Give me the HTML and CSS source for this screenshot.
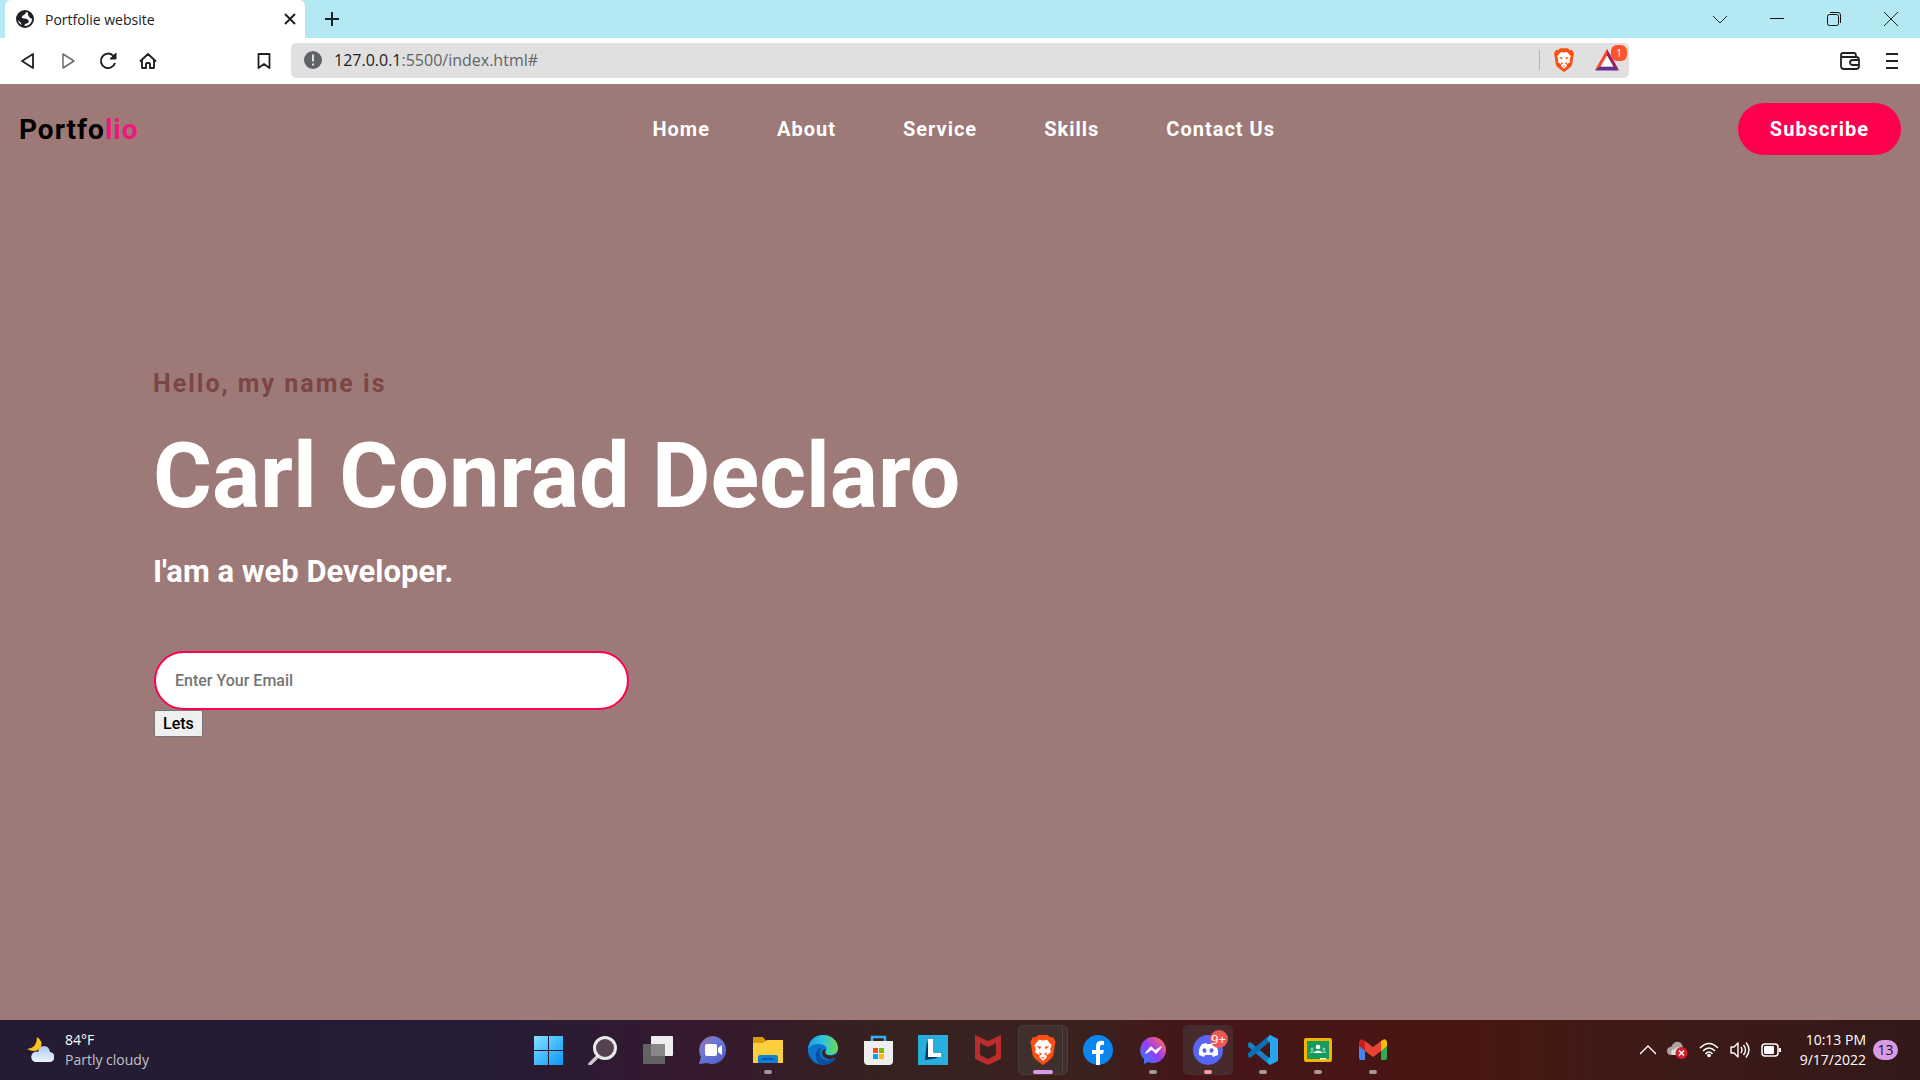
FILE: index.html
```
<!DOCTYPE html>
<html lang="en">
<head>
<meta charset="utf-8">
<title>Portfolie website</title>
<link rel="stylesheet" href="styles.css">
</head>
<body>
<div class="tabstrip">
  <div class="tab">
    <svg width="18" height="18" viewBox="0 0 18 18"><circle cx="9" cy="9" r="8" fill="#fff" stroke="#202124" stroke-width="2"/><path d="M1 8 2 4 6 1h3l1 2-2 2-2 1v2l5 1 2 2-1 2-3 1-1 3H6l-1-4-3-3zM12 1l4 4 1 4-3-1-2-3z" fill="#202124"/></svg>
    <span class="tab-title">Portfolie website</span>
    <button class="icon" aria-label="Close tab"><svg width="12" height="12" viewBox="0 0 12 12"><path d="M1 1l10 10M11 1 1 11" stroke="#202124" stroke-width="2"/></svg></button>
  </div>
  <button class="icon new-tab" aria-label="New tab"><svg width="16" height="16" viewBox="0 0 16 16"><path d="M8 1v14M1 8h14" stroke="#202124" stroke-width="2"/></svg></button>
  <div class="window-controls">
    <button class="icon" aria-label="Tab search"><svg width="14" height="14" viewBox="0 0 14 14"><path d="m0 4 7 7 7-7" fill="none" stroke="#222"/></svg></button>
    <button class="icon" aria-label="Minimize"><svg width="14" height="14" viewBox="0 0 14 14"><path d="M0 6.500h14" stroke="#111"/></svg></button>
    <button class="icon" aria-label="Restore"><svg width="14" height="14" viewBox="0 0 14 14"><rect x=".5" y="2.500" width="11" height="11" rx="2" fill="none" stroke="#111"/><path d="M3 .5h8q2.500 0 2.500 2.500v8" fill="none" stroke="#111"/></svg></button>
    <button class="icon" aria-label="Close"><svg width="14" height="14" viewBox="0 0 14 14"><path d="m0 0 14 14M14 0 0 14" stroke="#222"/></svg></button>
  </div>
</div>
<div class="toolbar">
  <div class="nav-buttons">
    <button class="icon" aria-label="Back"><svg width="18" height="18" viewBox="0 0 18 18"><path d="M14 2v14L3 9z" fill="none" stroke="#202124" stroke-width="1.800" stroke-linejoin="round"/></svg></button>
    <button class="icon" aria-label="Forward"><svg width="18" height="18" viewBox="0 0 18 18"><path d="M4 2v14l11-7z" fill="none" stroke="#6b6b75" stroke-width="1.500" stroke-linejoin="round"/></svg></button>
    <button class="icon" aria-label="Reload"><svg width="18" height="18" viewBox="0 0 18 18"><path d="M16 11a7.200 7.200 0 1 1-2-7.500" fill="none" stroke="#202124" stroke-width="2"/><path d="M17 1v6h-6z" fill="#202124" stroke="#202124" stroke-linejoin="round"/></svg></button>
    <button class="icon" aria-label="Home"><svg width="18" height="18" viewBox="0 0 18 18"><path d="M1 9.500 9 2l8 7.500M3 8v8h4v-4q0-1 1-1h2q1 0 1 1v4h4V8" fill="none" stroke="#202124" stroke-width="1.900" stroke-linejoin="round"/></svg></button>
  </div>
  <button class="icon bookmark" aria-label="Bookmark"><svg width="18" height="18" viewBox="0 0 18 18"><path d="M3.500 2h11v14L9 12l-5.500 4z" fill="none" stroke="#202124" stroke-width="1.800" stroke-linejoin="round"/></svg></button>
  <div class="address">
    <svg width="18" height="18" viewBox="0 0 18 18"><circle cx="9" cy="9" r="9" fill="#5f6368"/><path d="M9 3.500v7M9 12.500v2" stroke="#e0e0e0" stroke-width="2"/></svg>
    <span class="url"><b>127.0.0.1</b>:5500/index.html#</span>
    <span class="divider"></span>
    <svg class="shield" width="20" height="24" viewBox="0 0 32 38"><use href="#brave"/></svg>
    <span class="rewards"><svg width="24" height="22" viewBox="0 0 24 22"><path d="M12 0 0 21l5-2.500 7-12z" fill="#ff4724"/><path d="m12 0 12 21-5-2.500-7-12z" fill="#9e1f63"/><path d="M0 21.500h24l-5-4H5z" fill="#662d91"/><path d="m12 7 6 10.500H6z" fill="#fff"/></svg><span class="rewards-count">1</span></span>
  </div>
  <div class="toolbar-end">
    <button class="icon" aria-label="Wallet"><svg width="20" height="18" viewBox="0 0 20 18"><path d="M1 4v10q0 3 3 3h12q3 0 3-3V8q0-3-3-3H3Q1 5 1 3t2-2h11q2 0 2 3M19 8h-6q-3 0-3 2.500t3 2.500h6" fill="none" stroke="#202124" stroke-width="1.800"/></svg></button>
    <button class="icon" aria-label="Menu"><svg width="12" height="18" viewBox="0 0 12 18"><path d="M0 2h12M0 9h12M0 16h12" stroke="#202124" stroke-width="2"/></svg></button>
  </div>
</div>
<main class="page">
  <nav class="navbar">
    <a class="logo" href="#">Portfo<span>lio</span></a>
    <ul class="links">
      <li><a href="#">Home</a></li><li><a href="#">About</a></li><li><a href="#">Service</a></li><li><a href="#">Skills</a></li><li><a href="#">Contact Us</a></li>
    </ul>
    <a class="subscribe" href="#">Subscribe</a>
  </nav>
  <section class="content">
    <h4>Hello, my name is</h4>
    <h1>Carl Conrad Declaro</h1>
    <h3>I'am a web Developer.</h3>
    <form class="newsletter">
      <input type="email" aria-label="Email" placeholder="Enter Your Email">
      <button type="button">Lets</button>
    </form>
  </section>
</main>
<footer class="taskbar">
  <div class="weather">
    <svg width="27" height="26" viewBox="0 0 27 26"><defs><linearGradient id="cloud" x2="0" y2="1"><stop stop-color="#aac8f2"/><stop offset="1" stop-color="#f0f4fc"/></linearGradient></defs><path d="M10 0q6 4 4 10-5 7-14 2 10-1 10-12" fill="#ffc21a"/><path d="M8 25a5.500 5.500 0 0 1-1-10q3-1 4 0 1-6 6-6t6 6a5 5 0 0 1-1 10z" fill="url(#cloud)"/></svg>
    <div><p>84°F</p><p class="muted">Partly cloudy</p></div>
  </div>
  <div class="apps">
    <button class="app" aria-label="Start"><svg viewBox="0 0 30 30"><defs><linearGradient id="win" gradientUnits="userSpaceOnUse" x1="1" y1="1" x2="30" y2="30"><stop stop-color="#84e1ff"/><stop offset="1" stop-color="#0897fb"/></linearGradient></defs><path d="M1 1h14v14H1zM16 1h14v14H16zM1 16h14v14H1zM16 16h14v14H16z" fill="url(#win)"/></svg></button>
    <button class="app" aria-label="Search"><svg viewBox="0 0 30 30"><path d="m10 21-8 8" stroke="#c9cbcc" stroke-width="3.500" stroke-linecap="round"/><circle cx="17" cy="13" r="10.500" fill="#55414f" stroke="#e8eaea" stroke-width="3"/></svg></button>
    <button class="app" aria-label="Task view"><svg viewBox="0 0 30 30"><rect x="8" y="1" width="22" height="20" rx="1" fill="#eee"/><rect y="9" width="22" height="20" rx="1" fill="#636363"/><path d="M8 9h14v12H8z" fill="#888"/></svg></button>
    <button class="app" aria-label="Chat"><svg viewBox="0 0 30 30"><defs><linearGradient id="chat" x2="1" y2="1"><stop stop-color="#a16ba0"/><stop offset=".4" stop-color="#6c78d8"/><stop offset="1" stop-color="#5059c9"/></linearGradient></defs><path d="M15 1a14 14 0 1 1-6 27l-8 1 2-7A14 14 0 0 1 15 1" fill="url(#chat)"/><rect x="7" y="9" width="12" height="12" rx="2" fill="#fff"/><path d="m20 13 4-3v10l-4-3z" fill="#fff"/></svg></button>
    <button class="app open" aria-label="File Explorer"><svg viewBox="0 0 30 30"><path d="M0 2h10l3 4h14v6H0z" fill="#d99b08"/><path d="M0 8h10l4-3h16v23H0z" fill="#ffce3d"/><path d="M5 28v-6q0-2 2-2h16q2 0 2 2v6z" fill="#0f7fd2"/><path d="M9 24h12" stroke="#064f9a" stroke-width="1.500"/></svg></button>
    <button class="app" aria-label="Edge"><svg viewBox="0 0 30 30"><defs><linearGradient id="edge" x2="1"><stop stop-color="#1ba0e8"/><stop offset=".5" stop-color="#2fc3df"/><stop offset="1" stop-color="#6bdb4b"/></linearGradient></defs><circle cx="15" cy="15" r="15" fill="#0d75cf"/><path d="M0 14C1 5 7 0 15 0c9 0 15 6 15 13 0 5-4 7-8 7-5 0-5-2-4-4 2-4-2-7-7-7-5 0-9 2-11 5" fill="url(#edge)"/><path d="M18 12q-4-1-6 3-2 8 6 10 5 1 10-2-5 7-14 7-7-2-6-11 1-8 10-7" fill="#0b4f9e"/><path d="M18 14q-2 3 0 5 4 3 10 0l2-3v6l-2 1q-9 3-13-2-3-6 3-7" fill="#36242a"/></svg></button>
    <button class="app" aria-label="Microsoft Store"><svg viewBox="0 0 30 30"><path d="M9 7V2h13v5" fill="none" stroke="#36aef4" stroke-width="2.500"/><path d="M1 6h29v20q0 4-4 4H5q-4 0-4-4z" fill="#eee"/><path d="M10 13h5v5h-5z" fill="#f25022"/><path d="M16 13h5v5h-5z" fill="#7fba00"/><path d="M10 19h5v5h-5z" fill="#00a4ef"/><path d="M16 19h5v5h-5z" fill="#ffb900"/></svg></button>
    <button class="app" aria-label="Lenovo"><svg viewBox="0 0 30 30"><path d="M0 0h30v30H0z" fill="#27aedc"/><path d="m9 5-2 20 13-2-8-4z" fill="#07366a"/><path d="M10 4h5v14h8v4H10z" fill="#fff"/></svg></button>
    <button class="app" aria-label="McAfee"><svg viewBox="0 0 30 30"><path d="m2 0 13 6 13-6v24l-13 6-13-6zm5 8v12l8 4 8-4V8l-8 4z" fill="#bb2c2c" fill-rule="evenodd"/></svg></button>
    <button class="app active open" aria-label="Brave"><svg viewBox="0 0 32 38"><g id="brave"><path d="M10 0h12l3 3h4l3 6-1 4-2 13q-1 4-13 12Q4 30 3 26L1 13 0 9l3-6h4z" fill="#fb4f14"/><path d="m11 6 5 1 5-1 6 7-2 5 1 4-6 4 1 2-5 5-5-5 1-2-6-4 1-4-2-5z" fill="#fff"/><path d="m8 14 6 1-2 3zm16 0-6 1 2 3zM11 22l4 2-3 2zm10 0-4 2 3 2zM14 28h4l-2 2z" fill="#fb4f14"/></g></svg></button>
    <button class="app" aria-label="Facebook"><svg viewBox="0 0 30 30"><circle cx="15" cy="15" r="15" fill="#0c86ef"/><path d="M13 30V19H9v-4h4v-4q0-6 8-5v4q-4-1-4 2v3h4l-1 4h-3v11z" fill="#fff"/></svg></button>
    <button class="app open" aria-label="Messenger"><svg viewBox="0 0 30 30"><defs><linearGradient id="mess" x1="0" y1="1" x2="1" y2="0"><stop stop-color="#1689ff"/><stop offset=".5" stop-color="#9a3bf3"/><stop offset=".9" stop-color="#ff656a"/></linearGradient></defs><path d="M15 2a13 13 0 1 1-5 25l-4 2v-5A13 13 0 0 1 15 2" fill="url(#mess)"/><path d="m8 18 5-6 4 4 6-4-5 6-4-4z" fill="#fff" stroke="#fff" stroke-width="1.500" stroke-linejoin="round"/></svg></button>
    <button class="app lit open alert" aria-label="Discord"><svg viewBox="0 0 30 30"><circle cx="15" cy="15" r="15" fill="#5865f2"/><path d="m9 9 4-1 1 1h3l1-1 4 1q4 6 3 11l-5 2-1-2h-7l-1 2-5-2q-1-6 3-11" fill="#fff"/><ellipse cx="11.500" cy="15.500" rx="2" ry="2.300" fill="#5865f2"/><ellipse cx="18.500" cy="15.500" rx="2" ry="2.300" fill="#5865f2"/></svg><span class="count">9+</span></button>
    <button class="app open" aria-label="Visual Studio Code"><svg viewBox="0 0 30 30"><path d="m2 10 20 17" stroke="#1681c5" stroke-width="5" stroke-linecap="round"/><path d="M2 20 22 3" stroke="#0b70b2" stroke-width="5" stroke-linecap="round"/><path d="m22 0 8 4v22l-8 4-3-4 3-4V8l-3-4z" fill="#2aa5ec"/></svg></button>
    <button class="app open" aria-label="Classroom"><svg viewBox="0 0 30 30"><rect x="1" y="3" width="28" height="24" rx="2" fill="#f4b400"/><path d="M4 6h22v18H4z" fill="#159b5c"/><path d="M17 23h6v1.500h-6z" fill="#fff"/><circle cx="15" cy="12" r="2.300" fill="#fff"/><path d="M10 18q5-5 10 0z" fill="#fff"/><path d="M6 18q3-3 5-2l-2 2zm18 0q-3-3-5-2l2 2z" fill="#87caa9"/><circle cx="9" cy="14" r="1.500" fill="#87caa9"/><circle cx="21" cy="14" r="1.500" fill="#87caa9"/></svg></button>
    <button class="app open" aria-label="Gmail"><svg viewBox="0 0 30 30"><path d="M1 9v14q0 2 2 2h4V12z" fill="#4285f4"/><path d="M29 9v14q0 2-2 2h-4V12z" fill="#34a853"/><path d="M7 6v10l8 6 8-6V6l-8 6z" fill="#ea4335"/><path d="M1 7q1-5 6-1v10l-6-5z" fill="#c5221f"/><path d="M29 7q-1-5-6-1v10l6-5z" fill="#fbbc04"/></svg></button>
  </div>
  <div class="tray">
    <svg width="16" height="10" viewBox="0 0 16 10"><path d="m0 9 8-8 8 8" fill="none" stroke="#fff" stroke-width="1.300"/></svg>
    <svg width="21" height="18" viewBox="0 0 21 18"><path d="M4 14a4 4 0 0 1 0-8q3-6 8-5 3 1 4 5l-6 8z" fill="#aaa3a0"/><path d="M5 14q-3-5 3-6 3-4 7 0l-3 6z" fill="#ddd"/><circle cx="14.500" cy="12" r="6" fill="#d81e2c"/><path d="m12 9.500 5 5m0-5-5 5" stroke="#fff" stroke-width="1.500"/></svg>
    <svg width="20" height="16" viewBox="0 0 20 16"><path d="M1 6q9-9 18 0M4 9q6-6 12 0M6.500 12q3.500-4 7 0" fill="none" stroke="#fff" stroke-width="1.500"/><circle cx="10" cy="13.500" r="1.800" fill="#fff"/></svg>
    <svg width="20" height="18" viewBox="0 0 20 18"><path d="M1 6h3l4-4v14l-4-4H1zM11 6q2 3 0 6M13.500 4q4 5 0 10M16 1.500q6 7 0 15" fill="none" stroke="#fff" stroke-width="1.400" stroke-linejoin="round"/></svg>
    <svg width="20" height="14" viewBox="0 0 20 14"><rect x="1" y="1" width="16" height="12" rx="3" fill="none" stroke="#fff" stroke-width="1.500"/><rect x="3" y="3" width="10" height="8" rx="1" fill="#fff"/><path d="M18 5h2v4h-2z" fill="#fff"/></svg>
    <div class="clock"><p>10:13 PM</p><p>9/17/2022</p></div>
    <span class="notices">13</span>
  </div>
</footer>
</body>
</html>
```
FILE: styles.css
```
* { box-sizing: border-box; margin: 0; padding: 0; }
body {
  min-height: 100vh;
  display: flex;
  flex-direction: column;
  background: #9d7977;
  font-family: "Open Sans", "Noto Sans", sans-serif;
}
svg { display: block; flex: none; }
a { text-decoration: none; color: inherit; }
button { font: inherit; }
.icon { display: flex; align-items: center; justify-content: center; border: 0; background: none; }

.tabstrip { display: flex; height: 38px; padding: 0 1px 0 5px; background: #b4e8f2; }
.tab { display: flex; align-items: center; gap: 11px; width: 300px; padding: 0 9px 0 11px; background: #fff; border-radius: 6px 6px 0 0; }
.tab-title { flex: 1; font-size: 14px; color: #202124; }
.new-tab { width: 54px; }
.window-controls { display: flex; margin-left: auto; }
.window-controls .icon { width: 57px; }

.toolbar { display: flex; align-items: center; height: 46px; background: #fff; }
.nav-buttons { display: flex; padding-left: 8px; }
.nav-buttons .icon { width: 40px; height: 36px; }
.bookmark { width: 40px; height: 36px; margin-left: 76px; }
.address { display: flex; align-items: center; flex: 0 1 1338px; height: 35px; margin: 0 0 2px 7px; padding: 0 2px 0 13px; background: #e0e0e0; border-radius: 5px; }
.url { flex: 1; margin-left: 12px; font-size: 16px; color: #5f6368; }
.url b { font-weight: 400; color: #202124; }
.divider { width: 1px; height: 20px; background: #b5b5b5; }
.shield { margin: 0 21px 0 14px; }
.rewards { position: relative; width: 32px; }
.rewards-count { position: absolute; right: 0; top: -4px; width: 16px; border-radius: 6px; background: #fb542b; color: #fff; font-size: 10px; line-height: 16px; text-align: center; }
.toolbar-end { display: flex; gap: 26px; margin-left: auto; padding-right: 22px; }

.page { flex: 1; font-family: Roboto, "Liberation Sans", sans-serif; font-weight: 700; color: #fff; }
.navbar { display: flex; align-items: center; justify-content: space-between; padding: 19px 19px 0; }
.logo { color: #000; font-size: 28px; letter-spacing: 1px; }
.logo span { color: #ec1a7c; }
.links { display: flex; gap: 67px; padding-left: 51px; list-style: none; font-size: 20px; letter-spacing: 1px; }
.subscribe { padding: 0 32px; border-radius: 26px; background: #ff004f; font-size: 20px; letter-spacing: 1px; line-height: 52px; }
.content { padding: 209px 0 0 153px; }
.content h4 { color: #7c4645; font-size: 25px; letter-spacing: 2px; line-height: 40px; }
.content h1 { margin-top: 23px; font-size: 90px; line-height: 100px; }
.content h3 { margin-top: 25px; font-size: 31px; line-height: 40px; }
.newsletter { display: flex; flex-direction: column; align-items: flex-start; margin-top: 59px; padding-left: 1px; }
.newsletter input { width: 475px; height: 59px; padding: 0 19px; border: 2px solid #ff004f; border-radius: 30px; background: #fff; font: 500 16px Roboto, sans-serif; }
.newsletter input::placeholder { color: #757575; }
.newsletter button { padding: 0 8px; border: 1px solid #767676; border-radius: 2px; background: #efefef; color: #000; font-size: 16px; font-weight: 500; line-height: 25px; }

.taskbar { display: grid; grid-template-columns: 1fr auto 1fr; align-items: center; height: 60px; background: linear-gradient(90deg, #231c32 0%, #251c35 25%, #35192f 36%, #35221f 46%, #3b211e 57%, #451519 62%, #481711 77%, #401a16 84%, #32191a 100%); color: #fff; font-size: 14px; line-height: 20px; }
.weather { display: flex; gap: 11px; align-items: center; padding-left: 27px; }
.muted { color: #c5c0ca; }
.apps { display: flex; gap: 5px; }
.app { position: relative; display: grid; place-items: center; width: 50px; height: 50px; border: 1px solid transparent; border-radius: 5px; background: none; }
.app svg { width: 30px; height: 30px; }
.active { border-color: #4c3b38; background: #40302d; }
.active::before { content: ""; position: absolute; inset: -1px 4px -1px -1px; border-right: 1px solid #57443f; border-radius: 5px; }
.lit { background: #472a2b; }
.open::after { content: ""; position: absolute; bottom: 0; width: 8px; height: 4px; border-radius: 2px; background: #a8979b; }
.active::after { width: 20px; background: #d89ce4; }
.alert::after { background: #ff99a4; }
.count { position: absolute; right: 4px; top: 4px; width: 18px; border-radius: 9px; background: #ed5757; color: #fff; font-size: 13px; line-height: 18px; text-align: center; }
.tray { display: flex; align-items: center; justify-content: flex-end; gap: 11px; padding-right: 22px; }
.clock { margin-left: 8px; text-align: right; }
.notices { width: 25px; border-radius: 10px; background: #d99be5; color: #21151f; font-size: 14px; text-align: center; margin-left: -4px; }
```
